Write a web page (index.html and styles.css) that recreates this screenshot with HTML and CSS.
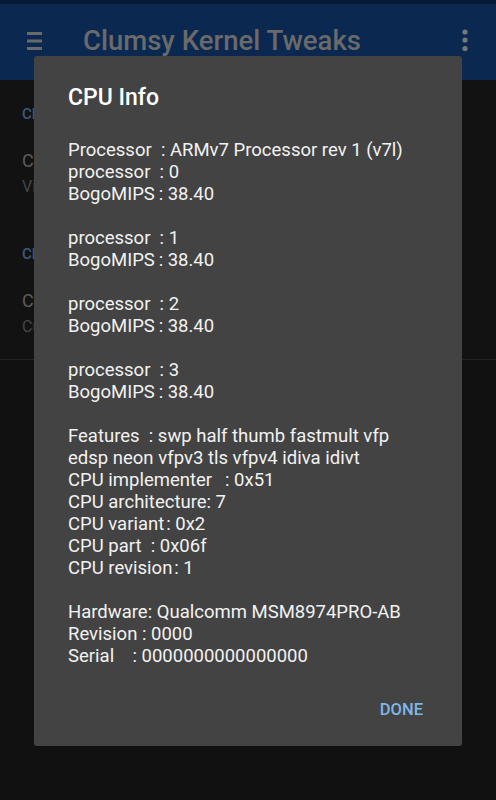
FILE: index.html
```html
<!DOCTYPE html>
<html>
<head>
<meta charset="utf-8">
<link rel="stylesheet" href="styles.css">
</head>
<body>
<div class="screen">
  <div class="statusbar"></div>
  <header class="appbar">
    <svg class="menu-icon" width="16" height="20" viewBox="0 0 16 20"><rect x="0" y="1" width="15" height="3" fill="#6a6a6a"/><rect x="0" y="8.5" width="15" height="3" fill="#6a6a6a"/><rect x="0" y="16" width="15" height="3" fill="#6a6a6a"/></svg>
    <div class="app-title">Clumsy Kernel Tweaks</div>
    <svg class="more-icon" width="8" height="24" viewBox="0 0 8 24"><circle cx="4" cy="4" r="2.6" fill="#777"/><circle cx="4" cy="12" r="2.6" fill="#777"/><circle cx="4" cy="20.5" r="2.6" fill="#777"/></svg>
  </header>
  <main class="list">
    <section class="group">
      <div class="group-header">CPU</div>
      <div class="item">
        <div class="item-title">CPU Info</div>
        <div class="item-sub">View processor information</div>
      </div>
    </section>
    <section class="group">
      <div class="group-header">CPU Governor</div>
      <div class="item">
        <div class="item-title">CPU Governor</div>
        <div class="item-sub">Current governor</div>
      </div>
    </section>
    <div class="divider"></div>
  </main>

  <div class="dialog">
    <div class="dialog-title">CPU Info</div>
    <div class="dialog-body">Processor  : ARMv7 Processor rev 1 (v7l)
processor  : 0
BogoMIPS&#8201;: 38.40

processor  : 1
BogoMIPS&#8201;: 38.40

processor  : 2
BogoMIPS&#8201;: 38.40

processor  : 3
BogoMIPS&#8201;: 38.40

Features  : swp half thumb fastmult vfp edsp neon vfpv3 tls vfpv4 idiva idivt
CPU implementer  &#8201;: 0x51
CPU architecture: 7
CPU variant&#8202;: 0x2
CPU part  : 0x06f
CPU revision&#8202;: 1

Hardware: Qualcomm MSM8974PRO-AB
Revision : 0000
Serial    : 0000000000000000</div>
    <div class="dialog-actions">
      <span class="btn">DONE</span>
    </div>
  </div>
</div>
</body>
</html>
```
FILE: styles.css
```css
html, body {
  margin: 0;
  padding: 0;
}
body {
  background: #111111;
  font-family: Roboto, "Noto Sans", sans-serif;
}
.screen {
  position: relative;
  width: 496px;
  height: 800px;
  overflow: hidden;
  background: #111111;
}
.statusbar {
  height: 4px;
  background: #081c3a;
}
.appbar {
  height: 76px;
  background: #0a2850;
  display: flex;
  align-items: center;
  padding: 0 0 4px 27px;
  box-sizing: border-box;
}
.menu-icon {
  display: block;
  margin-top: 2px;
}
.app-title {
  margin-left: 40px;
  font-size: 27.5px;
  font-weight: 500;
  color: #6a6a6a;
  flex: 1;
}
.more-icon {
  display: block;
  margin-right: 27px;
}
.list {
  background: #121212;
  padding-left: 22px;
}
.group-header {
  padding-top: 24px;
  line-height: 20px;
  font-size: 15px;
  font-weight: 500;
  color: #3c5a7e;
}
.item {
  padding-top: 25px;
}
.item-title {
  line-height: 24px;
  font-size: 18px;
  color: #5c5c5c;
}
.item-sub {
  margin-top: 3px;
  line-height: 22px;
  font-size: 16px;
  color: #474747;
}
.group + .group .group-header {
  padding-top: 46px;
}
.divider {
  margin-top: 21px;
  margin-left: -22px;
  height: 1px;
  background: #232323;
}
.dialog {
  position: absolute;
  left: 34px;
  top: 56px;
  width: 428px;
  height: 690px;
  background: #434343;
  border-radius: 3px;
  box-sizing: border-box;
  padding: 28px 0 0 34px;
  display: flex;
  flex-direction: column;
}
.dialog-title {
  font-size: 23px;
  font-weight: 500;
  line-height: 28px;
  color: #ffffff;
}
.dialog-body {
  margin-top: 27px;
  padding-right: 30px;
  font-size: 18.5px;
  line-height: 22px;
  color: #f2f2f2;
  white-space: pre-wrap;
}
.dialog-actions {
  display: flex;
  justify-content: flex-end;
  padding: 33px 39px 0 0;
}
.btn {
  font-size: 16.5px;
  font-weight: 500;
  line-height: 20px;
  color: #7db8e8;
}
```
